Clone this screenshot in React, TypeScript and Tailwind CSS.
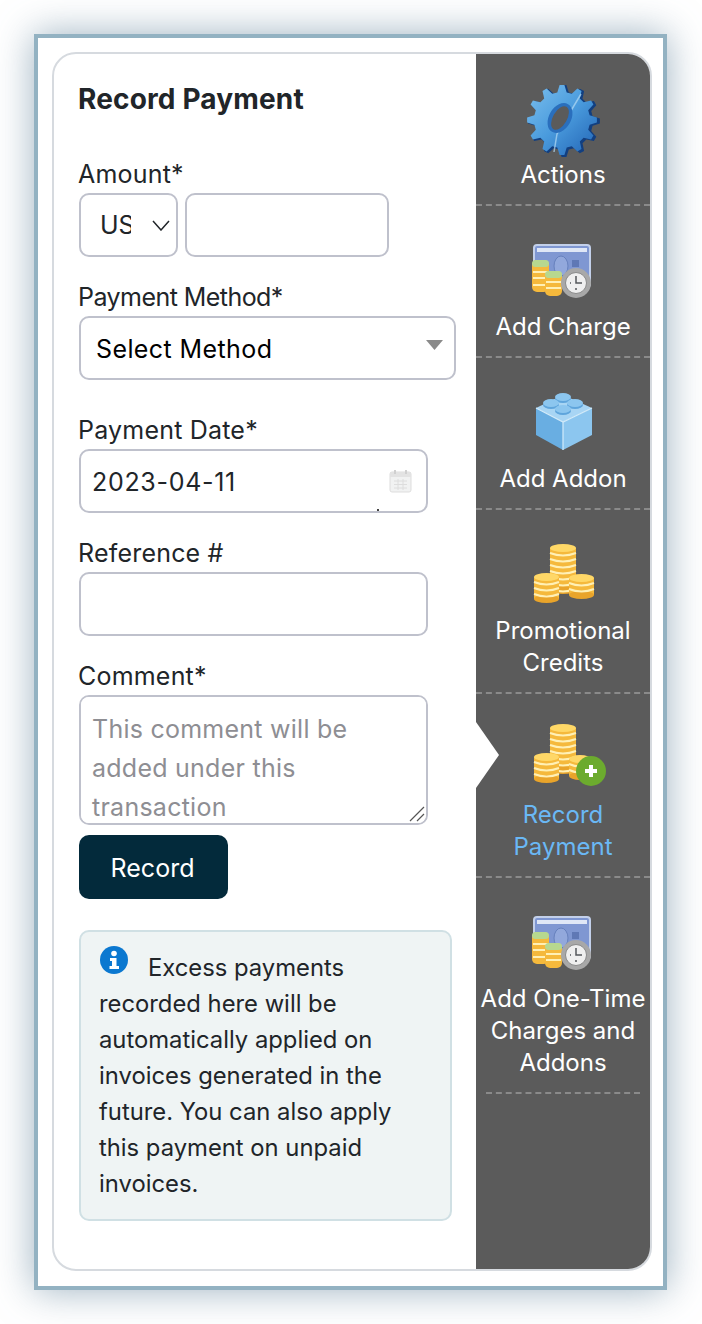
import type { ReactNode } from 'react'

const font = "font-['Inter',sans-serif]"

// gear outline with teeth
function gearPath(cx: number, cy: number, outer: number, inner: number, teeth: number) {
  const pts: string[] = []
  for (let i = 0; i < teeth; i++) {
    const a = (i / teeth) * Math.PI * 2
    const step = (Math.PI * 2) / teeth
    const list: [number, number][] = [
      [a - step * 0.32, inner],
      [a - step * 0.13, outer],
      [a + step * 0.13, outer],
      [a + step * 0.32, inner],
    ]
    list.forEach(([t, r]) => {
      pts.push(`${(cx + Math.cos(t) * r).toFixed(1)} ${(cy + Math.sin(t) * r).toFixed(1)}`)
    })
  }
  return `M${pts.join('L')}Z`
}

function GearIcon() {
  return (
    <svg width="72" height="76" viewBox="0 0 72 76" className="overflow-visible blur-[0.6px]">
      <defs>
        <linearGradient id="gearFill" x1="0" y1="0" x2="1" y2="1">
          <stop offset="0" stopColor="#7cc0ee" />
          <stop offset="0.5" stopColor="#4a9bdd" />
          <stop offset="1" stopColor="#2163b4" />
        </linearGradient>
      </defs>
      <path d={gearPath(37, 39, 36, 29, 12)} fill="#123f80" />
      <path d={gearPath(35, 38, 35, 28, 12)} fill="url(#gearFill)" />
      <path d="M54 12 L30 52 L27 70" stroke="#b4daf4" strokeWidth="1.5" fill="none" opacity="0.7" />
      <ellipse cx="33" cy="36" rx="11" ry="16" transform="rotate(30 33 36)" fill="#2a6fbd" />
      <ellipse cx="33" cy="36" rx="7" ry="13" transform="rotate(30 33 36)" fill="#5b5b5b" />
    </svg>
  )
}

function CoinStack({ x, y, w, h }: { x: number; y: number; w: number; h: number }) {
  const bands: number[] = []
  for (let b = y + 9; b < y + h - 4; b += 6) bands.push(b)
  return (
    <g>
      <rect x={x} y={y + 4} width={w} height={h - 8} fill="#f5b93c" />
      <ellipse cx={x + w / 2} cy={y + h - 4} rx={w / 2} ry="4" fill="#e9a42a" />
      {bands.map((b) => (
        <path key={b} d={`M${x} ${b} Q${x + w / 2} ${b + 5} ${x + w} ${b}`} stroke="#fff0b5" strokeWidth="2" fill="none" />
      ))}
      <ellipse cx={x + w / 2} cy={y + 4} rx={w / 2} ry="4" fill="#ffd867" />
    </g>
  )
}

function MoneyIcon() {
  return (
    <svg width="72" height="72" viewBox="0 0 72 72" className="overflow-visible blur-[0.6px]">
      <rect x="7" y="9" width="56" height="42" rx="3" fill="#7f97d2" stroke="#c3d0ea" strokeWidth="2" />
      <rect x="10" y="12" width="50" height="4" fill="#dfe7f6" />
      <ellipse cx="34" cy="30" rx="7" ry="10" fill="#92a8dc" stroke="#6680bd" />
      <rect x="45" y="24" width="7" height="7" fill="#5f78b5" />
      <rect x="5" y="24" width="17" height="32" rx="5" fill="#f5b93c" />
      <rect x="5" y="24" width="17" height="7" rx="3.5" fill="#b7d88f" />
      <path d="M6 36h15M6 42h15M6 49h15" stroke="#fff0b5" strokeWidth="2" />
      <rect x="18" y="35" width="17" height="25" rx="5" fill="#f5b93c" />
      <rect x="18" y="35" width="17" height="7" rx="3.5" fill="#b7d88f" />
      <path d="M19 46h15M19 52h15" stroke="#fff0b5" strokeWidth="2" />
      <circle cx="49" cy="47" r="15" fill="#a8a8a8" />
      <circle cx="49" cy="47" r="10.5" fill="#efefef" stroke="#8a8a8a" />
      <path d="M49 40v7h6M49 52v2M43 47h1" stroke="#55585c" strokeWidth="1.5" fill="none" />
    </svg>
  )
}

function BrickIcon() {
  return (
    <svg width="72" height="72" viewBox="0 2 72 72" className="overflow-visible blur-[0.6px]">
      <path d="M9 22 L36 36 L36 64 L9 49Z" fill="#69aee2" />
      <path d="M65 22 L36 36 L36 64 L65 49Z" fill="#8cc6ef" />
      <path d="M9 22 L36 9 L65 22 L36 36Z" fill="#a8d5f4" />
      <path d="M9 22 L36 36 L65 22 M36 36V64" stroke="#d3ecfb" strokeWidth="1.2" fill="none" />
      {[
        [36, 11],
        [24, 17],
        [48, 17],
        [36, 23],
      ].map(([cx, cy]) => (
        <g key={`${cx}-${cy}`}>
          <ellipse cx={cx} cy={cy + 2} rx="8" ry="4" fill="#5fa5dc" />
          <ellipse cx={cx} cy={cy} rx="8" ry="4" fill="#8cc6ef" />
        </g>
      ))}
    </svg>
  )
}

function CoinsIcon({ plus }: { plus?: boolean }) {
  return (
    <svg
      width="72"
      height="72"
      viewBox={plus ? '0 5 72 72' : '0 2 72 72'}
      className="overflow-visible blur-[0.6px]"
    >
      <CoinStack x={23} y={plus ? 5 : 6} w={26} h={50} />
      <CoinStack x={7} y={plus ? 34 : 35} w={25} h={30} />
      <CoinStack x={42} y={36} w={plus ? 22 : 25} h={25} />
      {plus && (
        <g>
          <circle cx="64" cy="52" r="15" fill="#6cab2e" />
          <path d="M64 46v12M58 52h12" stroke="#fff" strokeWidth="4" />
        </g>
      )}
    </svg>
  )
}

function SideItem({
  icon,
  lines,
  active,
  inset,
}: {
  icon: ReactNode
  lines: string[]
  active?: boolean
  inset?: boolean
}) {
  return (
    <div className="relative">
      <div className="flex flex-col items-center pb-[13px]">
        <div className="mt-[30px] mb-[3px] flex h-[72px] items-center justify-center">{icon}</div>
        {lines.map((l) => (
          <div key={l} className={`text-center text-[24px] leading-[32px] whitespace-nowrap ${active ? 'text-[#6ab8f5]' : 'text-white'}`}>
            {l}
          </div>
        ))}
      </div>
      <div className={`border-b-2 border-dashed border-[#8a8a8a] ${inset ? 'mx-[10px]' : ''}`} />
      {active && (
        <svg width="24" height="66" viewBox="0 0 24 66" className="absolute top-[28px] left-0">
          <path d="M0 0 L23 33 L0 66Z" fill="#fff" />
        </svg>
      )}
    </div>
  )
}

function FieldLabel({ children, tight }: { children: ReactNode; tight?: boolean }) {
  return (
    <div className={`-ml-[1px] text-[25px] leading-[38px] text-[#212529] ${tight ? 'tracking-[-0.55px]' : 'tracking-[0.2px]'}`}>
      {children}
    </div>
  )
}

const inputCls =
  'block h-[64px] rounded-[10px] border-2 border-[#bfc1cc] bg-white px-[13px] text-[25px] text-[#212529] outline-none'

export default function App() {
  return (
    <div className={`${font} h-[1324px] w-[702px] overflow-hidden bg-white pt-[34px] pl-[34px]`}>
      <div className="h-[1256px] w-[633px] border-4 border-[#93b2c2] bg-white pt-[14px] pr-[11px] pb-[15px] pl-[14px] shadow-[0_0_36px_rgba(90,125,150,0.6)]">
        <div className="flex h-full overflow-hidden rounded-[24px] border-2 border-[#d6dadf]">
          <div className="flex-1 pt-[23px] pl-[25px]">
            <h1 className="-ml-[1px] text-[28px] leading-[44px] font-bold tracking-[0.15px] text-[#212529]">Record Payment</h1>

            <div className="mt-[34px]">
              <FieldLabel>Amount*</FieldLabel>
              <div className="flex gap-[7px]">
                <div className="flex h-[64px] w-[99px] items-center justify-between overflow-hidden rounded-[10px] border-2 border-[#bfc1cc] pr-[6px] pl-[19px]">
                  <span className="w-[31px] overflow-hidden pt-[2px] text-[25px] text-[#212529]">USD</span>
                  <svg width="18" height="11" viewBox="0 0 18 11" fill="none">
                    <path d="M1 1l8 9 8-9" stroke="#212529" strokeWidth="1.5" />
                  </svg>
                </div>
                <input className={`${inputCls} w-[204px]`} aria-label="Amount" />
              </div>
            </div>

            <div className="mt-[21px]">
              <FieldLabel tight>Payment Method*</FieldLabel>
              <div className="flex h-[64px] w-[377px] items-center justify-between rounded-[10px] border-2 border-[#bfc1cc] pr-[11px] pl-[15px]">
                <span className="pt-[4px] text-[25px] tracking-[0.4px] text-black">Select Method</span>
                <svg width="17" height="10" viewBox="0 0 17 10" className="mb-[6px] blur-[0.5px]">
                  <path d="M0 0h17l-8.500 10z" fill="#8a8a8a" />
                </svg>
              </div>
            </div>

            <div className="mt-[31px]">
              <FieldLabel>Payment Date*</FieldLabel>
              <div className="relative flex h-[64px] w-[349px] items-center justify-between rounded-[10px] border-2 border-[#bfc1cc] pr-[14px] pl-[11px]">
                <span className="pt-[4px] text-[25px] tracking-[0.7px] text-[#212529]">2023-04-11</span>
                <svg width="23" height="24" viewBox="0 0 23 24" fill="none" className="opacity-70">
                  <rect x="1" y="3" width="21" height="20" rx="2" fill="#eceded" stroke="#cfcfcf" />
                  <rect x="1" y="3" width="21" height="5" fill="#d8d8d8" />
                  <path d="M6 1v4M17 1v4" stroke="#bdbdbd" strokeWidth="2" />
                  <path d="M5 12h13M5 15.500h13M5 19h13M9 10v11M14 10v11" stroke="#d0d0d0" />
                </svg>
                <div className="absolute right-[47px] bottom-0 h-[2px] w-[2px] bg-[#444]" />
              </div>
            </div>

            <div className="mt-[21px]">
              <FieldLabel>Reference #</FieldLabel>
              <input className={`${inputCls} w-[349px]`} aria-label="Reference" />
            </div>

            <div className="mt-[21px]">
              <FieldLabel>Comment*</FieldLabel>
              <div className="relative w-[349px]">
                <textarea
                  className="block h-[130px] w-full resize-none rounded-[10px] border-2 border-[#bfc1cc] bg-white px-[11px] pt-[13px] text-[25px] leading-[39px] tracking-[0.25px] outline-none placeholder:text-[#8e8e93]"
                  placeholder="This comment will be added under this transaction"
                />
                <svg width="16" height="16" viewBox="0 0 16 16" className="absolute right-[3px] bottom-[3px]">
                  <path d="M1 15L15 1M8 15l7-7" stroke="#555" strokeWidth="1.2" fill="none" />
                </svg>
              </div>
            </div>

            <button className="mt-[10px] block h-[64px] w-[149px] rounded-[10px] bg-[#032a3b] pt-[4px] pr-[2px] text-center text-[25px] text-white">
              Record
            </button>

            <div className="mt-[31px] h-[291px] w-[373px] rounded-[10px] border-2 border-[#d0e0e4] bg-[#eff4f4] pt-[18px] pr-[18px] pl-[18px] text-[23.8px] leading-[36px] text-[#212529]">
              <svg width="28" height="28" viewBox="0 0 28 28" className="mr-[20px] ml-[1px] inline-block -translate-y-[10px] align-middle">
                <circle cx="14" cy="14" r="14" fill="#0b78d0" />
                <circle cx="14" cy="7.500" r="2.800" fill="#fff" />
                <path d="M10 12h6.500v8H19v3H9.500v-3H12v-5h-2z" fill="#fff" />
              </svg>
              Excess payments recorded here will be automatically applied on invoices generated in the future. You can also apply this payment on unpaid invoices.
            </div>
          </div>

          <div className="w-[174px] shrink-0 bg-[#5b5b5b]">
            <SideItem icon={<GearIcon />} lines={['Actions']} />
            <SideItem icon={<MoneyIcon />} lines={['Add Charge']} />
            <SideItem icon={<BrickIcon />} lines={['Add Addon']} />
            <SideItem icon={<CoinsIcon />} lines={['Promotional', 'Credits']} />
            <SideItem icon={<CoinsIcon plus />} lines={['Record', 'Payment']} active />
            <SideItem icon={<MoneyIcon />} lines={['Add One-Time', 'Charges and', 'Addons']} inset />
          </div>
        </div>
      </div>
    </div>
  )
}
